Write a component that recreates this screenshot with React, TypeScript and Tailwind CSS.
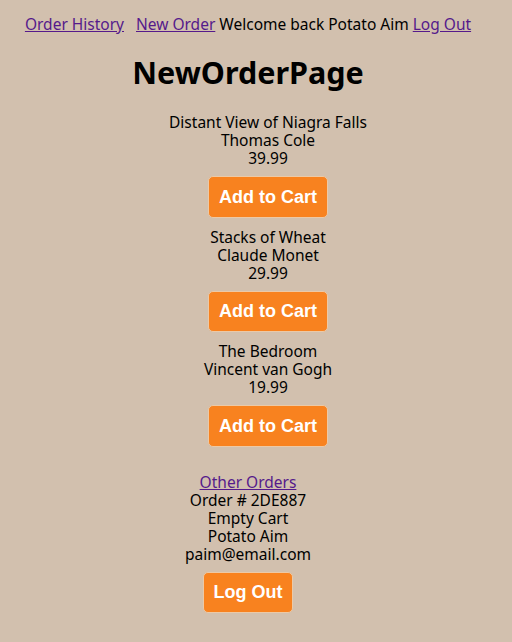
import React from 'react';

interface Painting {
    title: string;
    artist: string;
    price: string;
}

const paintings: Painting[] = [
    { title: 'Distant View of Niagra Falls', artist: 'Thomas Cole', price: '39.99' },
    { title: 'Stacks of Wheat', artist: 'Claude Monet', price: '29.99' },
    { title: 'The Bedroom', artist: 'Vincent van Gogh', price: '19.99' },
];

const btnClasses =
    'h-[41.5px] px-[10px] rounded-[5px] border border-[#ecc9a6] bg-[#f8821f] text-white text-[18px] font-bold font-["Liberation_Sans",Arial,sans-serif] leading-none';

const App: React.FC = () => {
    return (
        <div className="min-h-screen w-full bg-[#d2c0ae] text-black font-['Noto_Sans',sans-serif] text-[15.5px]">
            <div className="w-[496px] text-center">
                {/* top nav */}
                <nav className="pt-[15px] leading-[18px] whitespace-nowrap">
                    <a href="#" className="text-[#551a8b] underline">Order History</a>
                    <span className="inline-block w-[12px]" />
                    <a href="#" className="text-[#551a8b] underline">New Order</a>
                    <span> Welcome back Potato Aim </span>
                    <a href="#" className="text-[#551a8b] underline">Log Out</a>
                </nav>

                <h1 className="mt-[21px] h-[37px] text-[30.5px] leading-[37px] font-bold">NewOrderPage</h1>

                {/* painting list */}
                <ul className="mt-[22px] pl-10">
                    {paintings.map((p) => (
                        <li key={p.title} className="mb-[10px] flex flex-col items-center">
                            <div className="leading-[18px]">
                                <div>{p.title}</div>
                                <div>{p.artist}</div>
                                <div>{p.price}</div>
                            </div>
                            <button className={`mt-[9px] ${btnClasses}`}>Add to Cart</button>
                        </li>
                    ))}
                </ul>

                {/* account summary */}
                <div className="mt-[26px] flex flex-col items-center">
                    <div className="leading-[18px]">
                        <div>
                            <a href="#" className="text-[#551a8b] underline">Other Orders</a>
                        </div>
                        <div>Order # 2DE887</div>
                        <div>Empty Cart</div>
                        <div>Potato Aim</div>
                        <div>paim@email.com</div>
                    </div>
                    <button className={`mt-[9px] ${btnClasses}`}>Log Out</button>
                </div>
            </div>
        </div>
    );
};

export default App;
